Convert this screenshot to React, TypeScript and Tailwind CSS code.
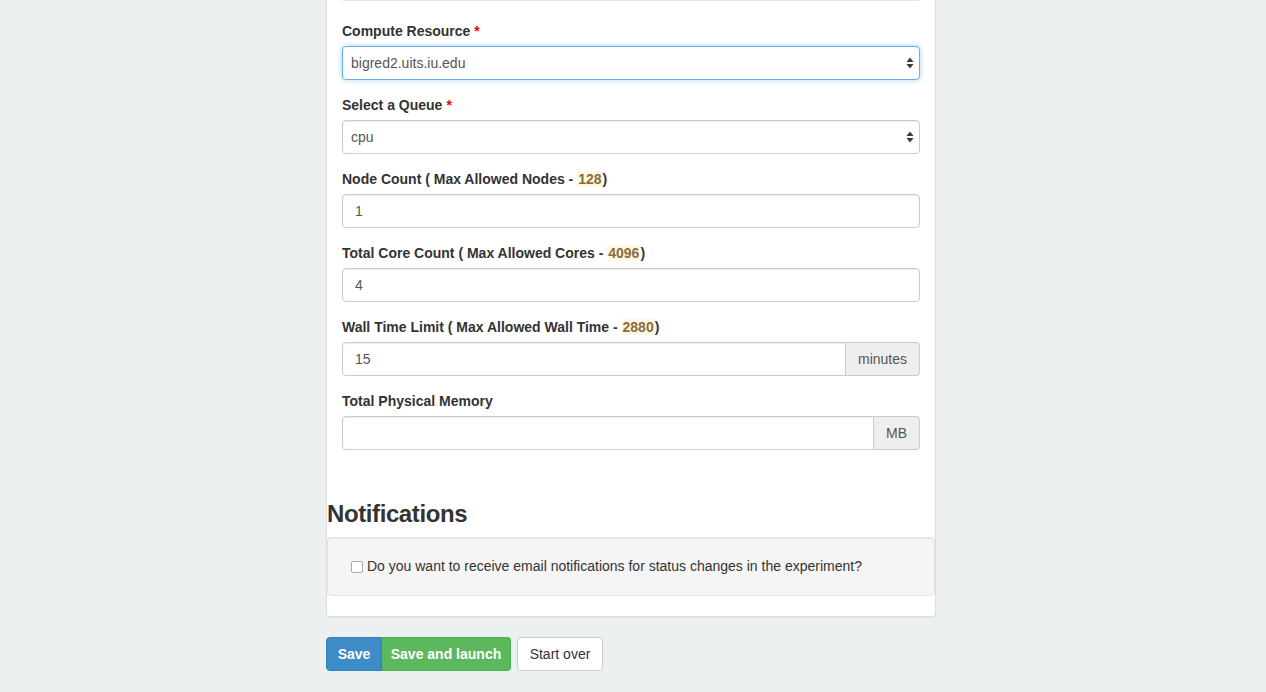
import React from "react";

const font = { fontFamily: '"Liberation Sans", Arial, Helvetica, sans-serif' };

function Caret() {
  return (
    <svg width="8" height="12" viewBox="0 0 8 12" className="absolute right-[5px] top-1/2 -translate-y-1/2">
      <path d="M4 0.5 L7.5 5 L0.5 5 Z" fill="#3a3a3a" />
      <path d="M4 11.5 L7.5 7 L0.5 7 Z" fill="#3a3a3a" />
    </svg>
  );
}

function Label({ children }: { children: React.ReactNode }) {
  return <div className="text-[14px] font-bold text-[#333] leading-[20px] mb-[5px]">{children}</div>;
}

function Mark({ children }: { children: React.ReactNode }) {
  return <span className="bg-[#fcf8e3] text-[#8a6d3b] px-[1px]">{children}</span>;
}

function Star() {
  return <span className="text-[#e00] ml-[4px]">*</span>;
}

function Select({ value, focused }: { value: string; focused?: boolean }) {
  return (
    <div
      className={
        "relative h-[34px] rounded-[4px] bg-white border flex items-center pl-[8px] text-[14px] text-[#555] " +
        (focused
          ? "border-[#66afe9] shadow-[0_0_5px_rgba(102,175,233,0.6)]"
          : "border-[#ccc] shadow-[inset_0_1px_1px_rgba(0,0,0,0.075)]")
      }
    >
      {value}
      <Caret />
    </div>
  );
}

function Input({ value, addon }: { value: string; addon?: string }) {
  return (
    <div className="flex h-[34px]">
      <div
        className={
          "flex-1 border border-[#ccc] bg-white flex items-center pl-[12px] text-[14px] text-[#555] shadow-[inset_0_1px_1px_rgba(0,0,0,0.075)] " +
          (addon ? "rounded-l-[4px]" : "rounded-[4px]")
        }
      >
        {value}
      </div>
      {addon && (
        <div className="border border-l-0 border-[#ccc] bg-[#eee] rounded-r-[4px] flex items-center px-[12px] text-[14px] text-[#555]">
          {addon}
        </div>
      )}
    </div>
  );
}

export default function App() {
  return (
    <div className="min-h-[692px] bg-[#ecf0f1]" style={font}>
      <div className="ml-[326px] w-[610px]">
        <div className="bg-white border-x border-b border-[#ddd] rounded-b-[4px] shadow-[0_1px_1px_rgba(0,0,0,0.05)] pb-[20px]">
          <div className="px-[15px]">
            <div className="h-px bg-[#e5e5e5] mx-[1px]" />
            <div className="pt-[20px]">
              <div className="mb-[15px]">
                <Label>
                  Compute Resource<Star />
                </Label>
                <Select value="bigred2.uits.iu.edu" focused />
              </div>
              <div className="mb-[15px]">
                <Label>
                  Select a Queue<Star />
                </Label>
                <Select value="cpu" />
              </div>
              <div className="mb-[15px]">
                <Label>
                  Node Count ( Max Allowed Nodes - <Mark>128</Mark>)
                </Label>
                <Input value="1" />
              </div>
              <div className="mb-[15px]">
                <Label>
                  Total Core Count ( Max Allowed Cores - <Mark>4096</Mark>)
                </Label>
                <Input value="4" />
              </div>
              <div className="mb-[15px]">
                <Label>
                  Wall Time Limit ( Max Allowed Wall Time - <Mark>2880</Mark>)
                </Label>
                <Input value="15" addon="minutes" />
              </div>
              <div>
                <Label>Total Physical Memory</Label>
                <Input value="" addon="MB" />
              </div>
            </div>
          </div>
          <h3 className="mt-[50px] mb-[10px] text-[24px] font-bold leading-[27px] text-[#333] tracking-[-0.4px]">
            Notifications
          </h3>
          <div className="bg-[#f5f5f5] border border-[#e3e3e3] rounded-[4px] shadow-[inset_0_1px_1px_rgba(0,0,0,0.05)] px-[23px] pt-[18px] pb-[19px]">
            <label className="flex items-center text-[14px] leading-[20px] text-[#333]">
              <span className="w-[12px] h-[12px] border border-[#aaa] rounded-[2px] bg-white mr-[4px] mt-[1px]" />
              Do you want to receive email notifications for status changes in the experiment?
            </label>
          </div>
        </div>
        <div className="mt-[20px] flex items-center">
          <div className="flex">
            <button className="h-[34px] w-[56px] bg-[#3d8bc7] text-white text-[14px] font-bold rounded-l-[4px] border border-[#3680b8]">
              Save
            </button>
            <button className="h-[34px] w-[129px] bg-[#5cb85c] text-white text-[14px] font-bold rounded-r-[4px] border border-[#4cae4c] border-l-0">
              Save and launch
            </button>
          </div>
          <button className="ml-[6px] h-[34px] w-[86px] bg-white text-[#333] text-[14px] rounded-[4px] border border-[#ccc]">
            Start over
          </button>
        </div>
      </div>
    </div>
  );
}
